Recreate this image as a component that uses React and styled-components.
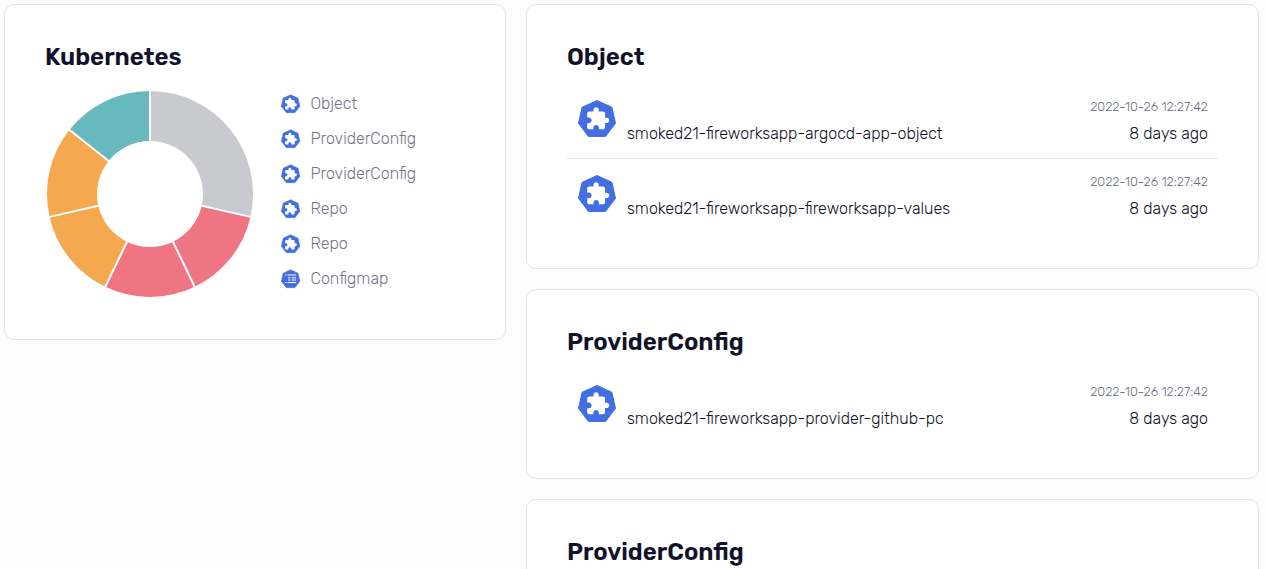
import React from 'react';
import styled, { createGlobalStyle } from 'styled-components';

const GlobalStyle = createGlobalStyle`
  * { box-sizing: border-box; }
  html, body { height: 100%; }
  body {
    margin: 0;
    overflow: hidden;
    background: #fcfcfc;
    color: #11112a;
    font-family: Rubik, Roboto, "Liberation Sans", sans-serif;
    -webkit-font-smoothing: antialiased;
  }
`;

const Page = styled.main`
  display: grid;
  grid-template-columns: 502px 733px;
  column-gap: 20px;
  align-items: start;
  height: 569px;
  overflow: hidden;
  padding: 4px;
`;

const Column = styled.div`
  display: flex;
  flex-direction: column;
  gap: 20px;
`;

const Card = styled.section`
  min-height: 190px;
  padding: 40px 40px 34px;
  border: 1px solid #e3e3e5;
  border-radius: 10px;
  background: #fff;
`;

const Title = styled.h2`
  height: 39px;
  margin: 0;
  font-size: 24px;
  font-weight: 600;
  line-height: 24px;
  white-space: nowrap;
`;

const Overview = styled.div`
  display: flex;
  height: 221px;
`;

const Chart = styled.svg`
  width: 210px;
  height: 210px;
  margin-top: 5px;
  flex: none;
`;

const Legend = styled.ul`
  margin: 2px 0 0 26px;
  padding: 0;
  list-style: none;
`;

const LegendItem = styled.li`
  display: flex;
  align-items: center;
  gap: 9.5px;
  height: 35px;
  color: #757588;
  font-size: 16px;
  font-weight: 300;
`;

const Row = styled.div`
  display: flex;
  height: 75px;
  padding: 15px 10px 0;
  border-bottom: 1px solid #e3e3e5;
  &:last-child { border-bottom-color: transparent; }
`;

const Name = styled.span`
  flex: 1;
  margin: 25px 0 0 10px;
  font-size: 16px;
  font-weight: 300;
  line-height: 20px;
`;

const Timing = styled.div`
  text-align: right;
  white-space: nowrap;
`;

const Stamp = styled.div`
  color: #6c6c80;
  font-size: 12.8px;
  font-weight: 300;
  line-height: 16px;
`;

const Age = styled.div`
  margin-top: 9px;
  font-size: 16px;
  font-weight: 300;
  line-height: 20px;
`;

const Glyph = styled.svg`
  display: block;
  flex: none;
  width: ${({ $small }) => ($small ? 20 : 40)}px;
  height: ${({ $small }) => ($small ? 20 : 40)}px;
`;

const PUZZLE =
  'M20.5 11H19V7c0-1.1-.9-2-2-2h-4V3.5C13 2.12 11.88 1 10.5 1S8 2.12 8 3.5V5H4c-1.1 0-1.99.9-1.99 2v3.8H3.5c1.49 0 2.7 1.21 2.7 2.7s-1.21 2.7-2.7 2.7H2V20c0 1.1.9 2 2 2h3.8v-1.5c0-1.49 1.21-2.7 2.7-2.7 1.49 0 2.7 1.21 2.7 2.7V22H17c1.1 0 2-.9 2-2v-4h1.5c1.38 0 2.5-1.12 2.5-2.5S21.88 11 20.5 11z';

function ResourceIcon({ kind, small }) {
  return (
    <Glyph viewBox={small ? '0.8 0 40 40' : '0 0 40 40'} $small={small} aria-hidden="true">
      <path
        d="M20 1.5 34.9 8.3 38.5 24.3 28.6 37.4H11.4L1.5 24.3 5.1 8.3Z"
        fill="#416ee0"
        stroke="#416ee0"
        strokeWidth="1"
        strokeLinejoin="round"
      />
      {kind === 'configmap' ? (
        <path
          d="M9 12H12M14 12H31M15 17.5H19.5M22 17.5H31M15 22H19.5M22 22H31M9 27H12M14 27H31"
          stroke="#fff"
          strokeWidth="2"
        />
      ) : (
        <path
          d={PUZZLE}
          fill="#fff"
          transform={small ? 'translate(6.8 6.4) scale(1.12)' : 'translate(8.1 7.2) scale(1.05)'}
        />
      )}
    </Glyph>
  );
}

const SLICES = [
  { value: 2, color: '#c9cacf' },
  { value: 1, color: '#f07582' },
  { value: 1, color: '#f07582' },
  { value: 1, color: '#f5a84e' },
  { value: 1, color: '#f5a84e' },
  { value: 1, color: '#67b9be' },
];

const TOTAL = SLICES.reduce((sum, slice) => sum + slice.value, 0);

const ARCS = SLICES.map(({ value, color }, index) => {
  const before = SLICES.slice(0, index).reduce((sum, slice) => sum + slice.value, 0);
  return { color, from: before / TOTAL, to: (before + value) / TOTAL };
});

function point(radius, turn) {
  const angle = turn * Math.PI * 2;
  return `${(105 + radius * Math.sin(angle)).toFixed(3)} ${(105 - radius * Math.cos(angle)).toFixed(3)}`;
}

function Donut() {
  return (
    <Chart viewBox="0 0 210 210">
      {ARCS.map(({ color, from, to }) => (
        <path
          key={from}
          d={`M${point(103, from)}A103 103 0 0 1 ${point(103, to)}L${point(53, to)}A53 53 0 0 0 ${point(53, from)}Z`}
          fill={color}
        />
      ))}
      {ARCS.map(({ from }) => (
        <path key={from} d={`M${point(52, from)}L${point(104, from)}`} stroke="#fff" strokeWidth="2" />
      ))}
    </Chart>
  );
}

const LEGEND = [
  { label: 'Object' },
  { label: 'ProviderConfig' },
  { label: 'ProviderConfig' },
  { label: 'Repo' },
  { label: 'Repo' },
  { label: 'Configmap', kind: 'configmap' },
];

const GROUPS = [
  {
    title: 'Object',
    items: ['smoked21-fireworksapp-argocd-app-object', 'smoked21-fireworksapp-fireworksapp-values'],
  },
  { title: 'ProviderConfig', items: ['smoked21-fireworksapp-provider-github-pc'] },
  { title: 'ProviderConfig', items: [] },
];

export default function App() {
  return (
    <>
      <GlobalStyle />
      <Page>
        <Card>
          <Title>Kubernetes</Title>
          <Overview>
            <Donut />
            <Legend>
              {LEGEND.map(({ label, kind }, index) => (
                <LegendItem key={index}>
                  <ResourceIcon kind={kind} small />
                  {label}
                </LegendItem>
              ))}
            </Legend>
          </Overview>
        </Card>
        <Column>
          {GROUPS.map(({ title, items }, index) => (
            <Card key={index}>
              <Title>{title}</Title>
              <div>
                {items.map((name) => (
                  <Row key={name}>
                    <ResourceIcon />
                    <Name>{name}</Name>
                    <Timing>
                      <Stamp>2022-10-26 12:27:42</Stamp>
                      <Age>8 days ago</Age>
                    </Timing>
                  </Row>
                ))}
              </div>
            </Card>
          ))}
        </Column>
      </Page>
    </>
  );
}
